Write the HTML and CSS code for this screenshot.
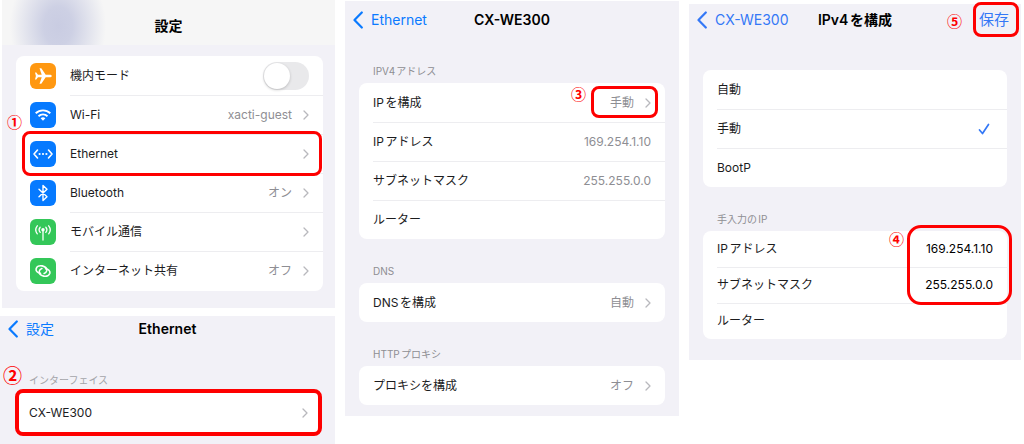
FILE: index.html
```html
<!DOCTYPE html>
<html lang="ja">
<head>
  <meta charset="UTF-8" />
  <meta name="viewport" content="width=device-width, initial-scale=1.0"/>
  <title>Ethernet 設定</title>
  <link rel="stylesheet" href="styles.css">
</head>
<body>
  <svg width="0" height="0" class="sprite" aria-hidden="true">
    <symbol id="chevron" viewBox="0 0 6 10">
      <path d="M1 1l4 4-4 4" fill="none" stroke="currentColor" stroke-width="1.3" stroke-linecap="round" stroke-linejoin="round"/>
    </symbol>
    <symbol id="back" viewBox="0 0 10 18">
      <path d="M8.800 1.500L1.500 9l7.300 7.500" fill="none" stroke="currentColor" stroke-width="2.200" stroke-linecap="round" stroke-linejoin="round"/>
    </symbol>
  </svg>

  <main class="guide">
    <div class="column">
      <!-- settings top -->
      <section class="screen screen-settings">
        <header class="top-bar">
          <h2>設定</h2>
        </header>
        <div class="card icon-card">
          <div class="row">
            <svg class="icon orange" viewBox="0 0 26 26">
              <path fill="#fff" d="M21.800 13c0-.8-1.100-1.300-2.300-1.300h-3.800L11.300 5.200H9.500l2.200 6.500H8L6.300 9.600H5l.9 3.400L5 16.400h1.300L8 14.300h3.700l-2.200 6.500h1.800l4.400-6.500h3.800c1.200 0 2.300-.5 2.300-1.300z"/>
            </svg>
            <label class="name" for="airplane">機内モード</label>
            <input type="checkbox" class="switch" id="airplane">
          </div>
          <a class="row" href="#">
            <svg class="icon blue" viewBox="0 0 26 26">
              <g fill="none" stroke="#fff" stroke-width="1.900">
                <path d="M5.700 11.300a10.500 10.500 0 0 1 14.600 0"/>
                <path d="M8.500 14.200a6.500 6.500 0 0 1 9 0"/>
              </g>
              <path fill="#fff" d="M10.600 16.300a3.500 3.500 0 0 1 4.800 0L13 18.800z"/>
            </svg>
            <span class="name">Wi-Fi</span>
            <span class="value">xacti-guest</span>
            <svg class="chevron"><use href="#chevron"/></svg>
          </a>
          <a class="row" href="#">
            <svg class="icon blue" viewBox="0 0 26 26">
              <path fill="none" stroke="#fff" stroke-width="1.600" stroke-linecap="round" stroke-linejoin="round" d="M7.500 9L4 13l3.500 4M18.500 9l3.500 4-3.500 4"/>
              <g fill="#fff"><circle cx="9.600" cy="13" r="1.100"/><circle cx="13" cy="13" r="1.100"/><circle cx="16.400" cy="13" r="1.100"/></g>
            </svg>
            <span class="name">Ethernet</span>
            <svg class="chevron"><use href="#chevron"/></svg>
            <span class="ring ring-1"></span>
            <span class="step step-1">①</span>
          </a>
          <a class="row" href="#">
            <svg class="icon blue" viewBox="0 0 26 26">
              <path fill="none" stroke="#fff" stroke-width="1.400" stroke-linejoin="round" stroke-linecap="round" d="M9 9.200l8 7.600-4 3.700v-15l4 3.700-8 7.600"/>
            </svg>
            <span class="name">Bluetooth</span>
            <span class="value">オン</span>
            <svg class="chevron"><use href="#chevron"/></svg>
          </a>
          <a class="row" href="#">
            <svg class="icon green" viewBox="0 0 26 26">
              <path fill="none" stroke="#fff" stroke-width="1.300" stroke-linecap="round" d="M13 11v10M10.200 8.200a4 4 0 0 0 0 5.200M15.800 8.200a4 4 0 0 1 0 5.200M7.300 6.800a6.500 6.500 0 0 0 0 8M18.700 6.800a6.500 6.500 0 0 1 0 8"/>
              <circle cx="13" cy="10.800" r="1.700" fill="#fff"/>
            </svg>
            <span class="name">モバイル通信</span>
            <svg class="chevron"><use href="#chevron"/></svg>
          </a>
          <a class="row" href="#">
            <svg class="icon green" viewBox="0 0 26 26">
              <g fill="none" stroke="#fff" stroke-width="1.600" stroke-linecap="round">
                <path d="M10.500 15.300C7.600 15 5.700 13 6.100 10.800c.5-2.300 3.100-3.500 6.100-2.900 3 .7 5 2.700 4.500 5-.3 1.200-1.300 2.100-2.600 2.500"/>
                <path d="M15.500 10.700c2.900.3 4.800 2.300 4.400 4.500-.5 2.300-3.100 3.500-6.100 2.900-3-.7-5-2.700-4.500-5 .3-1.200 1.300-2.100 2.600-2.500"/>
              </g>
            </svg>
            <span class="name">インターネット共有</span>
            <span class="value">オフ</span>
            <svg class="chevron"><use href="#chevron"/></svg>
          </a>
        </div>
      </section>

      <!-- interface list -->
      <section class="screen screen-interface">
        <header class="nav">
          <a class="back" href="#"><svg><use href="#back"/></svg>設定</a>
          <h2>Ethernet</h2>
        </header>
        <h3>インターフェイス</h3>
        <div class="card">
          <a class="row" href="#">
            <span class="name">CX-WE300</span>
            <svg class="chevron"><use href="#chevron"/></svg>
            <span class="ring ring-2"></span>
            <span class="step step-2">②</span>
          </a>
        </div>
      </section>
    </div>

    <!-- adapter details -->
    <section class="screen screen-adapter">
      <header class="nav">
        <a class="back" href="#"><svg><use href="#back"/></svg>Ethernet</a>
        <h2>CX-WE300</h2>
      </header>
      <h3>IPV4アドレス</h3>
      <div class="card">
        <a class="row" href="#">
          <span class="name">IPを構成</span>
          <span class="value">手動</span>
          <svg class="chevron"><use href="#chevron"/></svg>
          <span class="ring ring-3"></span>
          <span class="step step-3">③</span>
        </a>
        <div class="row"><span class="name">IPアドレス</span><span class="value">169.254.1.10</span></div>
        <div class="row"><span class="name">サブネットマスク</span><span class="value">255.255.0.0</span></div>
        <div class="row"><span class="name">ルーター</span></div>
      </div>
      <h3>DNS</h3>
      <div class="card">
        <a class="row" href="#">
          <span class="name">DNSを構成</span>
          <span class="value">自動</span>
          <svg class="chevron"><use href="#chevron"/></svg>
        </a>
      </div>
      <h3>HTTPプロキシ</h3>
      <div class="card">
        <a class="row" href="#">
          <span class="name">プロキシを構成</span>
          <span class="value">オフ</span>
          <svg class="chevron"><use href="#chevron"/></svg>
        </a>
      </div>
    </section>

    <!-- manual IPv4 -->
    <section class="screen screen-ipv4">
      <header class="nav">
        <a class="back" href="#"><svg><use href="#back"/></svg>CX-WE300</a>
        <h2>IPv4を構成</h2>
        <div class="save-box">
          <button type="button" class="save">保存</button>
          <span class="ring ring-5"></span>
          <span class="step step-5">⑤</span>
        </div>
      </header>
      <div class="card choices">
        <label class="row"><span class="name">自動</span><input type="radio" name="mode"></label>
        <label class="row">
          <span class="name">手動</span><input type="radio" name="mode" checked>
          <svg class="check" viewBox="0 0 12 12"><path d="M1.500 7l3 3.500 6-9" fill="none" stroke="currentColor" stroke-width="1.700" stroke-linecap="round" stroke-linejoin="round"/></svg>
        </label>
        <label class="row"><span class="name">BootP</span><input type="radio" name="mode"></label>
      </div>
      <h3>手入力のIP</h3>
      <div class="card fields">
        <div class="row"><label class="name" for="ip">IPアドレス</label><input type="text" id="ip" value="169.254.1.10"></div>
        <div class="row"><label class="name" for="mask">サブネットマスク</label><input type="text" id="mask" value="255.255.0.0"></div>
        <div class="row"><label class="name" for="router">ルーター</label><input type="text" id="router"></div>
        <span class="ring ring-4"></span>
        <span class="step step-4">④</span>
      </div>
    </section>
  </main>
</body>
</html>
```

FILE: styles.css
```css
:root {
  --bg: #f2f1f7;
  --text: #1c1c1e;
  --muted: #8e8e93;
  --line: #ededf0;
  --blue: #0a7aff;
  --red: #fe0000;
}

* {
  box-sizing: border-box;
}

body {
  margin: 0;
  background: #fff;
  color: var(--text);
  font-family: Inter, "Noto Sans CJK JP", sans-serif;
  font-size: 12px;
  line-height: 16px;
  text-autospace: normal;
}

.sprite {
  position: absolute;
}

a {
  color: inherit;
  text-decoration: none;
}

.guide {
  display: grid;
  grid-template-columns: 335fr 334fr 332fr;
  column-gap: 10px;
  align-items: start;
  min-height: 100vh;
  padding-right: 3px;
}

.column {
  display: flex;
  flex-direction: column;
  gap: 8px;
  min-height: 100vh;
}

.screen {
  background: var(--bg);
  padding: 0 14px;
}

.screen-settings {
  margin-left: 2px;
  padding: 0 0 17px;
}

.screen-settings .card {
  margin: 11px 12px 0 14px;
  padding-bottom: 1px;
}

.screen-interface {
  flex: 1;
  padding-left: 16px;
}

.screen-adapter {
  margin-top: 1px;
  padding-bottom: 11px;
}

.screen-ipv4 {
  margin-top: 4px;
  padding-bottom: 21px;
}

/* headers */
h2 {
  margin: 0;
  font-size: 14px;
  font-weight: 600;
  line-height: 20px;
  color: #000;
}

h3 {
  margin: 24px 14px 4px;
  font-size: 10px;
  font-weight: 400;
  line-height: 16px;
  color: var(--muted);
}

.top-bar {
  height: 45px;
  padding-top: 16px;
  text-align: center;
  background: radial-gradient(ellipse 48px 64px at 56px 26px, #c9cce2 0, #cdd0e4 30%, rgba(246, 246, 246, 0) 100%), #f6f6f6;
}

.nav {
  display: grid;
  grid-template-columns: 1fr auto 1fr;
  align-items: center;
  height: 38px;
  margin: 0 -6px;
}

.back {
  display: flex;
  align-items: center;
  gap: 8px;
  font-size: 14px;
  line-height: 20px;
  color: var(--blue);
}

.back svg {
  width: 10px;
  height: 18px;
}

.screen-interface .nav {
  height: 26px;
  margin: 0 -6px 0 -8px;
}

.screen-interface h3 {
  margin: 30px 13px 3px;
  color: #a4a4a9;
}

.screen-ipv4 .nav {
  height: 32px;
  margin-bottom: 34px;
}

.screen-ipv4 .back,
.save,
.check {
  color: #3478f6;
}

/* cards */
.card {
  position: relative;
  background: #fff;
  border-radius: 8px;
}

.row {
  position: relative;
  display: flex;
  align-items: center;
  height: 39px;
  padding: 0 14px;
}

.row + .row::before {
  content: "";
  position: absolute;
  top: 0;
  left: 14px;
  right: 0;
  height: 1px;
  background: var(--line);
}

.icon-card .row + .row::before {
  left: 54px;
}

.name {
  flex: 1;
}

.value {
  color: var(--muted);
}

.chevron {
  width: 6px;
  height: 10px;
  margin-left: 11px;
  color: #b8b8bd;
}

.icon {
  width: 26px;
  height: 26px;
  margin-right: 14px;
  border-radius: 6px;
}

.orange {
  background: #ff9811;
}

.blue {
  background: #067aff;
}

.green {
  background: #34c759;
}

.screen-interface .row {
  height: 43px;
  padding: 0 13px;
}

.fields .row {
  height: 36px;
}

/* controls */
.switch {
  appearance: none;
  width: 46px;
  height: 28px;
  margin: 0;
  padding: 1px;
  border-radius: 14px;
  background: #e9e9eb;
}

.switch::before {
  content: "";
  display: block;
  width: 26px;
  height: 26px;
  border-radius: 50%;
  background: #fff;
  box-shadow: 0 1px 3px rgba(0, 0, 0, 0.2);
}

.switch:checked {
  background: #34c759;
}

.switch:checked::before {
  margin-left: 18px;
}

.choices input {
  appearance: none;
  margin: 0;
}

.check {
  width: 12px;
  height: 12px;
  margin-right: 3px;
}

.fields input {
  width: 80px;
  padding: 0;
  border: none;
  background: none;
  color: #000;
  font: inherit;
  text-align: right;
}

.save-box {
  position: relative;
  justify-self: end;
  padding-right: 4px;
}

.save {
  display: block;
  padding: 0;
  border: none;
  background: none;
  font: inherit;
  font-size: 15px;
  line-height: 20px;
}

/* red marks */
.ring {
  position: absolute;
  border: 3px solid var(--red);
  border-radius: 8px;
  pointer-events: none;
  z-index: 1;
}

.ring-1 {
  inset: -3px 1px -3px 6px;
}

.ring-2 {
  inset: -2px -1px;
  border-width: 4px;
}

.ring-3 {
  inset: 3px 7px 4px auto;
  width: 67px;
}

.ring-4 {
  top: -6px;
  right: -5px;
  width: 105px;
  height: 80px;
  border-radius: 14px;
}

.ring-5 {
  inset: -8px -6px -7px;
}

.step {
  position: absolute;
  font-family: "Noto Sans CJK JP", sans-serif;
  font-size: 15px;
  font-weight: 700;
  line-height: 16px;
  color: var(--red);
}

.step-1 {
  top: -20px;
  left: -9px;
}

.step-2 {
  top: -24px;
  left: -13px;
  font-size: 19px;
}

.step-3 {
  top: 3px;
  right: 79px;
}

.step-4 {
  top: 0;
  right: 103px;
}

.step-5 {
  top: 3px;
  right: 51px;
}
```
